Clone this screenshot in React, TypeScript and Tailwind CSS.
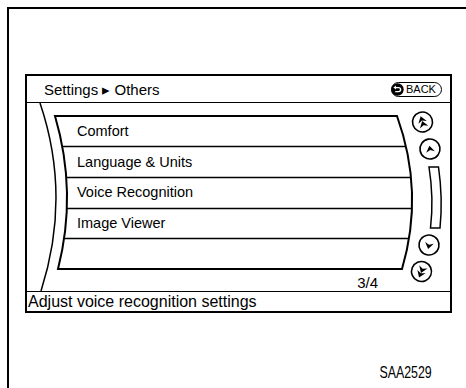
import React from "react";

function Arrow({ cx, cy, dir, double, rot = 0 }: { cx: number; cy: number; dir: "up" | "down"; double?: boolean; rot?: number }) {
  const head = (oy: number) => {
    const s = dir === "up" ? 1 : -1;
    return `M0 ${oy - 3.8 * s} L4.4 ${oy + 2.6 * s} L0 ${oy + 0.7 * s} L-4.4 ${oy + 2.6 * s} Z`;
  };
  return (
    <g transform={`translate(${cx} ${cy}) rotate(${rot})`}>
      <circle cx={0} cy={0} r={10} fill="white" stroke="black" strokeWidth={1.6} />
      {double ? (
        <>
          <path d={head(-2.3)} fill="black" />
          <path d={head(2.7)} fill="black" />
        </>
      ) : (
        <path d={head(0.4)} fill="black" />
      )}
    </g>
  );
}

export default function App() {
  const items = ["Comfort", "Language & Units", "Voice Recognition", "Image Viewer", ""];
  const box = "M28 13 L370 13 Q397.5 89.5 375 166 L31 166 Q50.5 89.5 28 13 Z";
  return (
    <div className="w-[466px] h-[388px] bg-white overflow-hidden pt-[7px] pl-[7px] text-black font-['Liberation_Sans',Arial,sans-serif]">
      <div className="h-[381px] border-l-2 border-t-2 border-black pt-[65px] pl-[16px] flex flex-col">
        <div className="w-[427px] h-[239px] border-2 border-black flex flex-col">
          <div className="h-[27px] border-b border-black flex items-center justify-between pl-[17px] pr-[8px]">
            <span className="text-[15px] leading-none">Settings ▸ Others</span>
            <div className="h-[15px] w-[51px] border-[1.5px] border-black rounded-full flex items-center">
              <svg width="13" height="13" viewBox="0 0 13 13" className="-ml-[1px]">
                <circle cx="6.5" cy="6.5" r="6.2" fill="black" />
                <path d="M4.5 4.6 H7.6 A2 2 0 0 1 7.6 8.6 H4.2" fill="none" stroke="white" strokeWidth="1.4" />
                <path d="M2.4 4.6 L5 2.6 L5 6.6 Z" fill="white" />
              </svg>
              <span className="text-[11px] leading-none ml-[2px]">BACK</span>
            </div>
          </div>
          <div className="relative h-[188px] pt-[13px] pl-[50px]">
            <svg className="absolute inset-0 pointer-events-none" width="423" height="188" viewBox="0 0 423 188">
              <defs>
                <clipPath id="boxclip">
                  <path d={box} />
                </clipPath>
              </defs>
              <path d="M13 0 Q44.5 93 14 188" fill="none" stroke="black" strokeWidth="1.5" />
              <g clipPath="url(#boxclip)" stroke="black" strokeWidth="1.3">
                <line x1="0" y1="43.5" x2="423" y2="43.5" />
                <line x1="0" y1="74.5" x2="423" y2="74.5" />
                <line x1="0" y1="105.5" x2="423" y2="105.5" />
                <line x1="0" y1="135.5" x2="423" y2="135.5" />
              </g>
              <path d={box} fill="none" stroke="black" strokeWidth="2" />
              <Arrow cx={395.5} cy={19} dir="up" double rot={-18} />
              <Arrow cx={403} cy={46} dir="up" rot={-10} />
              <path d="M402 64 L411.5 64 Q416 95 413 125 L403.5 125 Q407 95 402 64 Z" fill="white" stroke="black" strokeWidth="1.5" />
              <Arrow cx={402} cy={142} dir="down" rot={12} />
              <Arrow cx={394.5} cy={168.5} dir="down" double rot={22} />
            </svg>
            <div className="relative flex flex-col">
              {items.map((t, i) => (
                <div key={i} className="h-[30.6px] flex items-center text-[14.5px] leading-none">
                  {t}
                </div>
              ))}
            </div>
            <div className="relative flex justify-end pr-[72px] mt-[5px]">
              <span className="text-[15px] leading-[17px]">3/4</span>
            </div>
          </div>
          <div className="flex-1 border-t border-black flex items-center pl-[1px]">
            <span className="text-[16px] leading-none">Adjust voice recognition settings</span>
          </div>
        </div>
        <div className="flex justify-end pr-[34px] mt-[50px]">
          <span className="inline-block text-[16.5px] leading-[18px] scale-x-[0.75] origin-right">SAA2529</span>
        </div>
      </div>
    </div>
  );
}
